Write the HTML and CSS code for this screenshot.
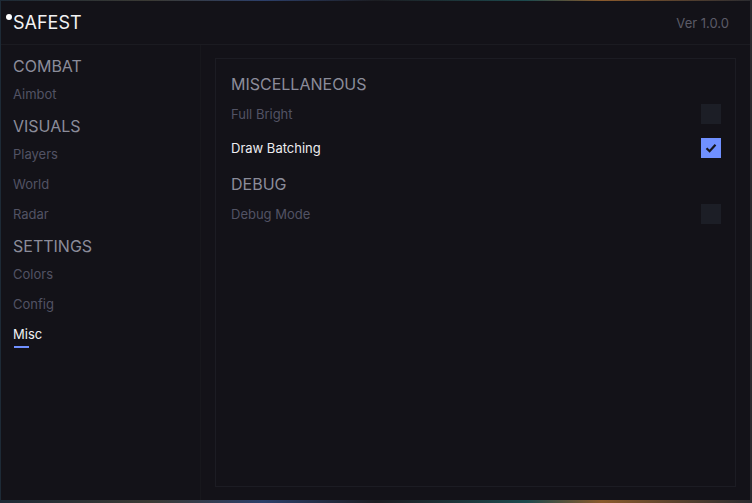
FILE: index.html
```html
<!DOCTYPE html>
<html lang="en">
  <head>
    <meta charset="UTF-8" />
    <meta name="viewport" content="width=device-width, initial-scale=1.0" />
    <title>SAFEST</title>
    <link rel="stylesheet" href="styles.css">
  </head>
  <body>
    <div class="menu">
      <div class="header">
        <span class="dot"></span>
        <span class="brand">SAFEST</span>
        <span class="version">Ver 1.0.0</span>
      </div>
      <div class="main">
        <div class="sidebar">
          <div class="group">
            <div class="group-title">COMBAT</div>
            <div class="tab">Aimbot</div>
          </div>
          <div class="group">
            <div class="group-title">VISUALS</div>
            <div class="tab">Players</div>
            <div class="tab">World</div>
            <div class="tab">Radar</div>
          </div>
          <div class="group">
            <div class="group-title">SETTINGS</div>
            <div class="tab">Colors</div>
            <div class="tab">Config</div>
            <div class="tab active">Misc</div>
          </div>
        </div>
        <div class="content">
          <div class="panel">
            <div class="section-title">MISCELLANEOUS</div>
            <div class="option">
              <span>Full Bright</span>
              <span class="check"></span>
            </div>
            <div class="option on">
              <span>Draw Batching</span>
              <span class="check">
                <svg width="12" height="10" viewBox="0 0 12 10"><path d="M1.5 5.2 L4.6 8.2 L10.5 1.8" fill="none" stroke="#16161c" stroke-width="2.2"/></svg>
              </span>
            </div>
            <div class="section-title">DEBUG</div>
            <div class="option">
              <span>Debug Mode</span>
              <span class="check"></span>
            </div>
          </div>
        </div>
      </div>
    </div>
  </body>
</html>
```

FILE: styles.css
```css
* {
  margin: 0;
  padding: 0;
  box-sizing: border-box;
}
html, body {
  height: 100%;
}
body {
  background: linear-gradient(90deg, #1d2a36 0%, #3b3a34 20%, #2c3f6a 35%, #1c1d22 50%, #1d4a4e 70%, #8a5a2c 80%, #2a2b30 100%);
  font-family: Inter, "Noto Sans", sans-serif;
  padding: 1px 2px 3px 1px;
  overflow: hidden;
}
.menu {
  height: 499px;
  background-color: #131218;
  display: flex;
  flex-direction: column;
}
.header {
  height: 44px;
  border-bottom: 1px solid #1b1b21;
  display: flex;
  align-items: center;
  padding-left: 5px;
  padding-right: 21px;
  flex-shrink: 0;
}
.dot {
  width: 6px;
  height: 6px;
  border-radius: 50%;
  background-color: #fff;
  align-self: flex-start;
  margin-top: 13px;
  margin-right: 1px;
}
.brand {
  color: #f2f2f4;
  font-size: 18px;
}
.version {
  margin-left: auto;
  color: #5b5b67;
  font-size: 13px;
}
.main {
  flex: 1;
  display: flex;
  min-height: 0;
}
.sidebar {
  width: 200px;
  border-right: 1px solid #17171c;
  padding: 11px 0 0 12px;
  display: flex;
  flex-direction: column;
  gap: 12px;
}
.group-title {
  color: #8b8c9a;
  font-size: 16px;
  line-height: 20px;
}
.tab {
  color: #525364;
  font-size: 13px;
  line-height: 20px;
  margin-top: 10px;
  position: relative;
}
.group-title + .tab {
  margin-top: 8px;
}
.tab.active {
  color: #f2f2f4;
}
.tab.active::after {
  content: "";
  position: absolute;
  left: 1px;
  top: 22px;
  width: 15px;
  height: 2px;
  background-color: #7090ff;
}
.content {
  flex: 1;
  padding: 13px 14px 13px 14px;
  display: flex;
}
.panel {
  flex: 1;
  border: 1px solid #1c1c23;
  padding: 15px 14px 0 15px;
}
.section-title {
  color: #8b8c9a;
  font-size: 16px;
  line-height: 20px;
  margin-top: 16px;
}
.section-title:first-child {
  margin-top: 0;
}
.option {
  display: flex;
  justify-content: space-between;
  align-items: center;
  height: 20px;
  margin-top: 10px;
  color: #525364;
  font-size: 13px;
}
.option + .option {
  margin-top: 14px;
}
.option.on {
  color: #ececf0;
}
.check {
  width: 20px;
  height: 20px;
  background-color: #1c1e26;
  display: flex;
  align-items: center;
  justify-content: center;
}
.option.on .check {
  background-color: #7090ff;
}
```
